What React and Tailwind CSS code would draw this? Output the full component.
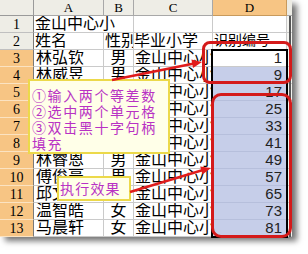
import React from 'react';

const people = [
  ['林弘钦', '男'],
  ['林威昱', '男'],
  ['林子轩', '男'],
  ['林佳豪', '男'],
  ['林宇航', '女'],
  ['林俊杰', '男'],
  ['林睿恩', '男'],
  ['傅俊豪', '男'],
  ['邱文杰', '男'],
  ['温智皓', '女'],
  ['马晨轩', '女'],
];

const cellFont = { fontFamily: '"Liberation Serif", "Noto Sans CJK SC", serif' };

function Arrows() {
  return (
    <svg className="absolute left-0 top-0 pointer-events-none" width="308" height="254" viewBox="0 0 308 254">
      <line x1="112" y1="80" x2="194" y2="63.5" stroke="#e01c1c" strokeWidth="2.5" />
      <polygon points="202,62 193,68 191.4,59.6" fill="#e01c1c" />
      <line x1="130" y1="192" x2="203" y2="170" stroke="#e01c1c" strokeWidth="2.5" />
      <polygon points="211,168 202.5,174.6 200.2,166.6" fill="#e01c1c" />
    </svg>
  );
}

export default function App() {
  return (
    <div className="relative w-[308px] h-[254px] bg-white overflow-hidden">
      <div className="w-[292px] h-[237px] bg-white shadow-[5px_4px_6px_rgba(0,0,0,0.55)] grid grid-cols-[34px_70px_30px_79px_74px_5px] grid-rows-[16px_repeat(13,17px)] text-black">
        {/* column header row */}
        <div className="bg-[#eeede6] border-r border-b border-[#9a9a9a]" />
        {['A', 'B', 'C'].map((l) => (
          <div key={l} className="bg-[#eeede6] border-r border-b border-[#a8a8a8] flex items-center justify-center text-[13px] leading-none" style={cellFont}>
            {l}
          </div>
        ))}
        <div className="bg-[#f7c584] border-r border-b border-[#c89a5c] flex items-center justify-center text-[13px] leading-none" style={cellFont}>
          D
        </div>
        <div className="bg-[#ecebe4] border-b border-[#a8a8a8]" />

        {/* row 1 */}
        <div className="bg-[#eeede6] border-r border-b border-r-[#7a7a7a] border-b-[#c0c0c0] flex items-center justify-center text-[14px]" style={cellFont}>1</div>
        <div className="col-span-2 border-r border-b border-[#cacaca] pl-[1px] text-[16px] leading-[16px] whitespace-nowrap overflow-hidden" style={cellFont}>金山中心小</div>
        <div className="border-r border-b border-[#cacaca]" />
        <div className="border-r border-b border-[#cacaca]" />
        <div className="bg-[#f4f4f0] border-b border-[#cacaca]" />

        {/* row 2 */}
        <div className="bg-[#eeede6] border-r border-b border-r-[#7a7a7a] border-b-[#c0c0c0] flex items-center justify-center text-[14px]" style={cellFont}>2</div>
        <div className="border-r border-b border-[#cacaca] pl-[1px] text-[16px] leading-[16px] whitespace-nowrap overflow-hidden" style={cellFont}>姓名</div>
        <div className="border-r border-b border-[#cacaca] pl-[1px] text-[16px] leading-[16px] whitespace-nowrap overflow-hidden" style={cellFont}>性别</div>
        <div className="border-r border-b border-[#cacaca] text-[16px] leading-[16px] whitespace-nowrap overflow-hidden" style={cellFont}>毕业小学</div>
        <div className="border-r border-b border-[#cacaca] pl-[1px] text-[14px] leading-[16px] whitespace-nowrap overflow-hidden" style={cellFont}>识别编号</div>
        <div className="bg-[#f4f4f0] border-b border-[#cacaca]" />

        {/* rows 3-13 */}
        {people.map(([name, sex], i) => (
          <React.Fragment key={i}>
            <div className="bg-[#f7c584] border-r border-b border-r-[#7a7a7a] border-b-[#fbe3c2] flex items-center justify-center text-[14px]" style={cellFont}>
              {i + 3}
            </div>
            <div className="border-r border-b border-[#cacaca] pl-[2px] text-[16px] leading-[16px] whitespace-nowrap overflow-hidden" style={cellFont}>{name}</div>
            <div className="border-r border-b border-[#cacaca] text-center text-[16px] leading-[16px] whitespace-nowrap overflow-hidden" style={cellFont}>{sex}</div>
            <div className="border-r border-b border-[#cacaca] pl-[1px] text-[16px] leading-[16px] whitespace-nowrap overflow-hidden" style={cellFont}>金山中心小学</div>
            <div className={`${i === 0 ? 'bg-white border-[#cacaca]' : 'bg-[#c6cee9] border-[#b6bfdc]'} border-b pr-[5px] text-right text-[15px] leading-[16px] font-['Liberation_Sans',sans-serif] text-[#222]`}>
              {1 + 8 * i}
            </div>
            <div className="bg-[#f4f4f0] border-b border-[#cacaca]" />
          </React.Fragment>
        ))}
      </div>

      {/* selection border */}
      <div className="absolute left-[211px] top-[49px] w-[77px] h-[189px] border-2 border-black pointer-events-none" />
      <div className="absolute left-[289px] top-[16px] w-[2px] h-[221px] bg-[#555] pointer-events-none" />

      {/* red highlight frames */}
      <div className="absolute left-[202px] top-[41px] w-[90px] h-[43px] border-[3px] border-[#d41a1a] rounded-[8px] pointer-events-none" />
      <div className="absolute left-[211px] top-[93px] w-[81px] h-[145px] border-[3px] border-[#d41a1a] rounded-[10px] pointer-events-none" />

      {/* callouts */}
      <div className="absolute left-[28px] top-[79px] w-[142px] h-[75px] border-2 border-[#ecd94a] bg-[#ffffe8] pl-[2px] pt-[6px] text-[14px] leading-[16px] tracking-[1.6px] text-[#b832c4] font-['Noto_Sans_CJK_SC',sans-serif] whitespace-nowrap">
        <div>①输入两个等差数</div>
        <div>②选中两个单元格</div>
        <div>③双击黑十字句柄</div>
        <div>填充</div>
      </div>
      <div className="absolute left-[57px] top-[176px] w-[74px] h-[25px] border-2 border-[#ecd94a] bg-[#ffffe8] flex items-center pl-[1px] text-[14px] tracking-[1.2px] text-[#b832c4] font-['Noto_Sans_CJK_SC',sans-serif] whitespace-nowrap">
        执行效果
      </div>

      <Arrows />
    </div>
  );
}
